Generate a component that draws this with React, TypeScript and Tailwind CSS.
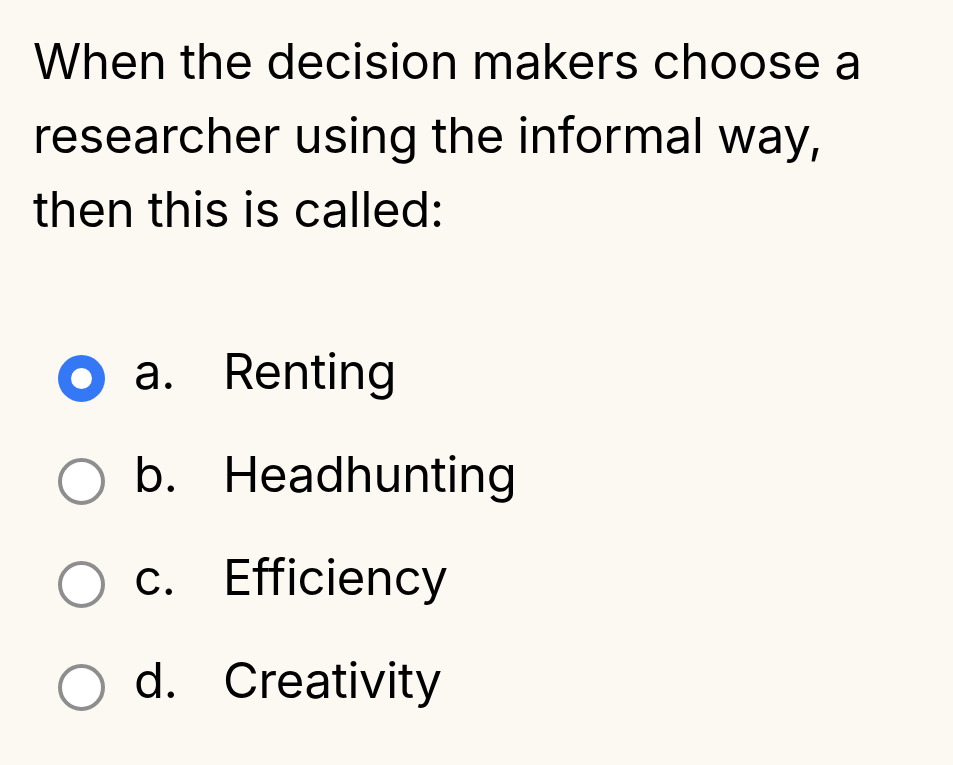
import React from "react";

const options = [
  { letter: "a.", text: "Renting", selected: true },
  { letter: "b.", text: "Headhunting", selected: false },
  { letter: "c.", text: "Efficiency", selected: false },
  { letter: "d.", text: "Creativity", selected: false },
];

export default function App() {
  return (
    <div
      className="w-[953px] h-[765px] bg-[#fcf9f3] text-black overflow-hidden"
      style={{ fontFamily: "Inter, 'Noto Sans', Roboto, sans-serif" }}
    >
      <div className="pl-[33px] pt-[25px] pr-4">
        <p className="text-[49px] leading-[74px] tracking-[-0.3px]">
          When the decision makers choose a<br />
          researcher using the informal way,<br />
          then this is called:
        </p>
      </div>
      <div className="mt-[80px] flex flex-col">
        {options.map((o) => (
          <div key={o.letter} className="h-[103px] flex items-center pl-[58px]">
            {o.selected ? (
              <div className="w-[47px] h-[47px] rounded-full bg-[#3478f6] flex items-center justify-center shrink-0">
                <div className="w-[21px] h-[21px] rounded-full bg-white" />
              </div>
            ) : (
              <div className="w-[47px] h-[47px] rounded-full border-[4px] border-[#8e8e8e] bg-white shrink-0" />
            )}
            <span className="ml-[29px] w-[89px] text-[49px] leading-none pb-[15px] tracking-[-0.3px]">{o.letter}</span>
            <span className="text-[49px] leading-none pb-[15px] tracking-[-0.3px]">{o.text}</span>
          </div>
        ))}
      </div>
    </div>
  );
}
